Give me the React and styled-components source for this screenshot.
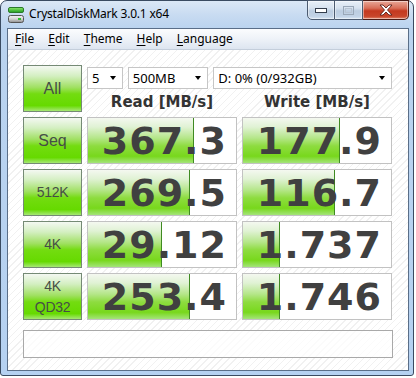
import React from 'react';
import styled, { createGlobalStyle } from 'styled-components';

const GlobalStyle = createGlobalStyle`
  html, body {
    margin: 0;
    padding: 0;
    background: #ffffff;
  }
  body {
    width: 416px;
    height: 378px;
    overflow: hidden;
  }
`;

const Window = styled.div`
  box-sizing: border-box;
  width: 414px;
  height: 376px;
  border: 1px solid #3a4b61;
  border-radius: 7px 7px 3px 3px;
  background: linear-gradient(180deg, #dbe8f6 0px, #c8dbf1 14px, #bad3ef 28px, #b5d1f1 100%);
  display: flex;
  flex-direction: column;
  padding: 0 4px 4px 6px;
`;

const TitleBar = styled.div`
  height: 27px;
  display: flex;
  align-items: flex-start;
  font-family: "Noto Sans", "Open Sans", sans-serif;
  font-size: 12px;
  color: #000;
`;

const AppIcon = styled.svg`
  margin: 5px 0 0 1px;
  flex: none;
`;

const Title = styled.span`
  margin: 5px 0 0 5px;
  line-height: 16px;
  letter-spacing: -0.2px;
`;

const Caption = styled.div`
  margin-left: auto;
  margin-top: -1px;
  display: flex;
`;

const CapButton = styled.div`
  box-sizing: border-box;
  width: ${p => (p.$close ? 46 : 28)}px;
  height: 20px;
  border: 1px solid ${p => (p.$close ? '#4a1c16' : '#4c5b70')};
  border-left-width: ${p => (p.$first ? 1 : 0)}px;
  border-radius: ${p => (p.$first ? '0 0 0 5px' : p.$close ? '0 0 5px 0' : '0')};
  background: ${p =>
    p.$close
      ? 'linear-gradient(180deg, #e8a898 0%, #d86e58 40%, #c4391f 55%, #c8452a 85%, #e0856a 100%)'
      : 'linear-gradient(180deg, #e8f0f8 0%, #d6e2ef 40%, #bccde0 55%, #c2d3e6 85%, #d8e6f4 100%)'};
  display: flex;
  align-items: center;
  justify-content: center;
  box-shadow: inset 0 0 0 1px rgba(255, 255, 255, 0.45);
`;

const Client = styled.div`
  flex: 1;
  border: 1px solid #5a6e88;
  display: flex;
  flex-direction: column;
  background: #ffffff;
`;

const MenuBar = styled.div`
  height: 20px;
  display: flex;
  align-items: center;
  background: linear-gradient(180deg, #fbfcfe 0%, #eef2f8 50%, #dde5f0 100%);
  border-bottom: 1px solid #c4cedb;
  font-family: "Noto Sans", "Open Sans", sans-serif;
  font-size: 12px;
  color: #000;
`;

const MenuItem = styled.span`
  padding: 0 7px;
  line-height: 20px;
  u {
    text-decoration-thickness: 1px;
    text-underline-offset: 2px;
  }
`;

const Content = styled.div`
  flex: 1;
  padding: 15px 0 0 15px;
  background: repeating-linear-gradient(135deg, #ffffff 0px, #ffffff 4px, #f1f1f1 4px, #f1f1f1 5px);
`;

const Grid = styled.div`
  display: grid;
  grid-template-columns: 59px 150px 150px;
  grid-auto-rows: 47px;
  column-gap: 5px;
  row-gap: 5px;
`;

const LabelButton = styled.div`
  box-sizing: border-box;
  border: 1px solid #758a75;
  background: linear-gradient(180deg, #f4f8f2 0%, #d4efc2 22%, #9fe060 48%, #73dc10 62%, #66da00 88%, #a6e874 100%);
  display: flex;
  flex-direction: column;
  align-items: center;
  justify-content: center;
  font-family: "Liberation Sans", Arial, sans-serif;
  font-size: ${p => (p.$big ? 16 : 14)}px;
  line-height: 21px;
  color: #464e46;
  letter-spacing: ${p => (p.$big ? 0 : -0.3)}px;
`;

const TopCell = styled.div`
  grid-column: 2 / span 2;
  display: flex;
  flex-direction: column;
  padding-top: 2px;
`;

const SelectRow = styled.div`
  display: flex;
  gap: 5px;
`;

const Select = styled.div`
  box-sizing: border-box;
  width: ${p => p.$w}px;
  height: 22px;
  border: 1px solid #c6c6c6;
  background: #ffffff;
  display: flex;
  align-items: center;
  padding: 0 6px 0 4px;
  font-family: "Noto Sans", "Open Sans", sans-serif;
  font-size: 13px;
  color: #000;
`;

const SelectText = styled.span`
  flex: 1;
  white-space: nowrap;
`;

const Arrow = styled.span`
  width: 0;
  height: 0;
  border-left: 3.5px solid transparent;
  border-right: 3.5px solid transparent;
  border-top: 4px solid #000;
`;

const Headers = styled.div`
  display: grid;
  grid-template-columns: 150px 150px;
  column-gap: 5px;
  margin-top: 3px;
`;

const Header = styled.div`
  text-align: center;
  font-family: "DejaVu Sans", Verdana, sans-serif;
  font-weight: bold;
  font-size: 15px;
  line-height: 20px;
  color: #333333;
`;

const ValueBox = styled.div`
  position: relative;
  box-sizing: border-box;
  border: 1px solid #c2c2c2;
  background: #ffffff;
  overflow: hidden;
`;

const Bar = styled.div`
  position: absolute;
  left: 0;
  top: 0;
  bottom: 0;
  box-sizing: border-box;
  border-right: 1px solid #3f8a22;
  background: linear-gradient(180deg, #f4f8f0 0%, #e0f2d4 20%, #b4e688 45%, #8edc40 62%, #78d81c 85%, #a4e47a 100%);
`;

const Value = styled.div`
  position: relative;
  height: 100%;
  display: flex;
  align-items: center;
  justify-content: flex-end;
  padding-right: 9px;
  font-family: "DejaVu Sans", Verdana, sans-serif;
  font-weight: bold;
  font-size: 38px;
  letter-spacing: 1px;
  color: #404040;
`;

const StatusBar = styled.div`
  box-sizing: border-box;
  width: 370px;
  height: 28px;
  margin-top: 10px;
  border: 1px solid #a9a9a9;
  background: rgba(255, 255, 255, 0.7);
`;

const rows = [
  { label: ['Seq'], big: true, read: '367.3', write: '177.9', rw: 106, ww: 97 },
  { label: ['512K'], read: '269.5', write: '116.7', rw: 102, ww: 92 },
  { label: ['4K'], read: '29.12', write: '1.737', rw: 74, ww: 37 },
  { label: ['4K', 'QD32'], read: '253.4', write: '1.746', rw: 102, ww: 37 },
];

const menus = ['File', 'Edit', 'Theme', 'Help', 'Language'];

function DriveIcon() {
  return (
    <AppIcon width="16" height="17" viewBox="0 0 16 17">
      <defs>
        <linearGradient id="gtop" x1="0" y1="0" x2="0" y2="1">
          <stop offset="0" stopColor="#8ee86a" />
          <stop offset="1" stopColor="#1f9a1f" />
        </linearGradient>
        <linearGradient id="gbody" x1="0" y1="0" x2="0" y2="1">
          <stop offset="0" stopColor="#f6f6f6" />
          <stop offset="0.5" stopColor="#d2d2d2" />
          <stop offset="1" stopColor="#8c8c8c" />
        </linearGradient>
      </defs>
      <rect x="0.5" y="1.5" width="15" height="5" rx="1.5" fill="url(#gtop)" stroke="#2a7a2a" />
      <rect x="0.5" y="9.5" width="15" height="7" rx="2" fill="url(#gbody)" stroke="#555" />
      <rect x="10" y="12" width="3" height="2" fill="#30c030" />
    </AppIcon>
  );
}

export default function App() {
  return (
    <>
      <GlobalStyle />
      <Window>
        <TitleBar>
          <DriveIcon />
          <Title>CrystalDiskMark 3.0.1 x64</Title>
          <Caption>
            <CapButton $first>
              <svg width="12" height="5" viewBox="0 0 12 5">
                <rect x="0.5" y="0.5" width="11" height="4" fill="#fff" stroke="#333d4c" />
              </svg>
            </CapButton>
            <CapButton>
              <svg width="11" height="9" viewBox="0 0 11 9">
                <rect x="0.5" y="0.5" width="10" height="8" fill="none" stroke="#9aa8b8" />
                <rect x="2.5" y="2.5" width="6" height="4" fill="none" stroke="#b8c4d2" />
              </svg>
            </CapButton>
            <CapButton $close>
              <svg width="14" height="12" viewBox="0 0 14 12">
                <path
                  d="M1 1 L4 1 L7 4 L10 1 L13 1 L8.5 6 L13 11 L10 11 L7 8 L4 11 L1 11 L5.5 6 Z"
                  fill="#fff"
                  stroke="#5a2018"
                  strokeWidth="0.9"
                  strokeLinejoin="round"
                />
              </svg>
            </CapButton>
          </Caption>
        </TitleBar>
        <Client>
          <MenuBar>
            {menus.map(m => (
              <MenuItem key={m}>
                <u>{m[0]}</u>
                {m.slice(1)}
              </MenuItem>
            ))}
          </MenuBar>
          <Content>
            <Grid>
              <LabelButton $big>All</LabelButton>
              <TopCell>
                <SelectRow>
                  <Select $w={36}>
                    <SelectText>5</SelectText>
                    <Arrow />
                  </Select>
                  <Select $w={81}>
                    <SelectText>500MB</SelectText>
                    <Arrow />
                  </Select>
                  <Select $w={180}>
                    <SelectText>D: 0% (0/932GB)</SelectText>
                    <Arrow />
                  </Select>
                </SelectRow>
                <Headers>
                  <Header>Read [MB/s]</Header>
                  <Header>Write [MB/s]</Header>
                </Headers>
              </TopCell>
              {rows.map(r => (
                <React.Fragment key={r.read}>
                  <LabelButton $big={r.big}>
                    {r.label.map(l => (
                      <span key={l}>{l}</span>
                    ))}
                  </LabelButton>
                  <ValueBox>
                    <Bar style={{ width: r.rw }} />
                    <Value>{r.read}</Value>
                  </ValueBox>
                  <ValueBox>
                    <Bar style={{ width: r.ww }} />
                    <Value>{r.write}</Value>
                  </ValueBox>
                </React.Fragment>
              ))}
            </Grid>
            <StatusBar />
          </Content>
        </Client>
      </Window>
    </>
  );
}
